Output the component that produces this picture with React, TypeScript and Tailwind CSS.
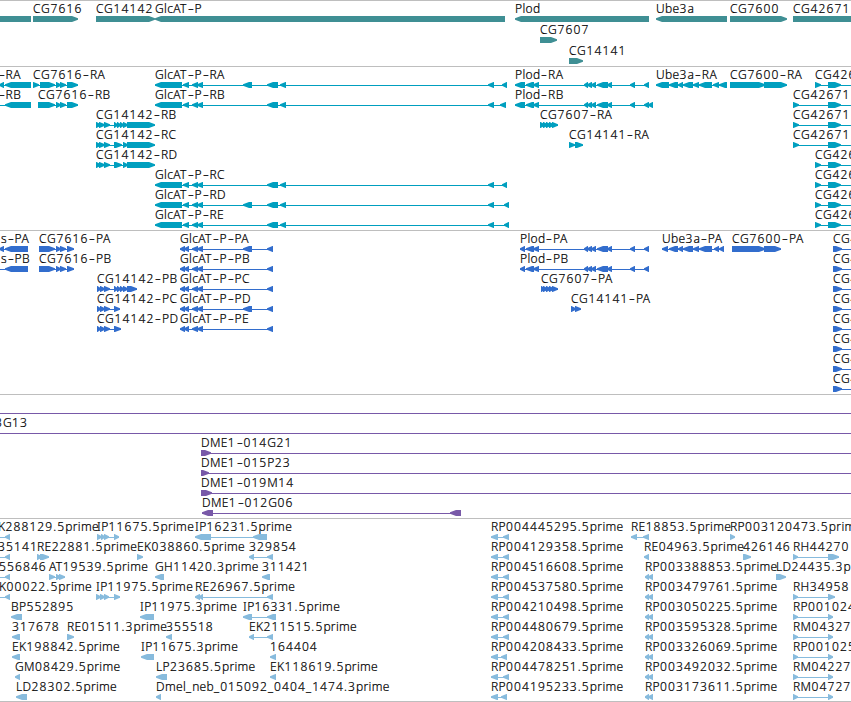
type Dir = "l" | "r";
type Exon = [number, number];
type Feature = {
  label?: string;
  x: number;
  dir: Dir;
  exons: Exon[];
  line?: Exon;
};

const f = (
  label: string,
  x: number,
  dir: Dir,
  exons: Exon[],
  line?: Exon
): Feature => ({ label, x, dir, exons, line });

// exon sets shared by several isoforms
const cg7616: Exon[] = [[56, 61], [60, 66]];
const cg14142: Exon[] = [[96, 101], [99, 105], [104, 110]];
const glcat: Exon[] = [[155, 182], [183, 189], [192, 198], [197, 203]];
const glcatMid: Exon[] = [[267, 278], [280, 286], [488, 494]];
const plodMid: Exon[] = [[584, 588], [587, 592], [591, 596], [597, 608], [607, 612], [630, 635]];
const plod: Exon[] = [[515, 525], [526, 534], [533, 539], ...plodMid];
const plodP: Exon[] = [[520, 525], [526, 534], [533, 539], ...plodMid, [644, 649]];
const glcatP: Exon[] = [[180, 185], [184, 189], [192, 198], [197, 203], [267, 273]];
const glcatPLong: Exon[] = [...glcatP, [243, 252]];
const cg14142P: Exon[] = [[97, 101], [100, 105], [104, 110]];

const longCG = f("CG42671", 793, "r", [[793, 799], [828, 841]], [793, 851]);
const shortCG = f("CG42671", 815, "r", [[815, 821], [828, 841]], [815, 851]);
const protCG = f("CG42671", 833, "r", [[833, 842]], [833, 851]);

const genes: Feature[][] = [
  [
    { x: 0, dir: "l", exons: [[-20, 31]] },
    f("CG7616", 33, "r", [[33, 78]]),
    f("CG14142", 96, "r", [[96, 155]]),
    f("GlcAT-P", 155, "l", [[155, 505]]),
    f("Plod", 515, "l", [[515, 649]]),
    f("Ube3a", 656, "l", [[656, 727]]),
    f("CG7600", 730, "r", [[730, 787]]),
    f("CG42671", 793, "r", [[793, 880]]),
  ],
  [f("CG7607", 540, "r", [[540, 557]])],
  [f("CG14141", 569, "r", [[569, 583]])],
];

const transcripts: Feature[][] = [
  [
    f("-RA", -2, "l", [[-1, 4], [5, 31]]),
    f("CG7616-RA", 33, "r", [[33, 39], [40, 55], ...cg7616, [67, 78]]),
    f("GlcAT-P-RA", 155, "l", [...glcat, [243, 252], ...glcatMid, [502, 507]]),
    f("Plod-RA", 515, "l", [...plod, [644, 649]]),
    f("Ube3a-RA", 656, "l", [[656, 669], [669, 678], [678, 683], [683, 693], [693, 699], [699, 712], [713, 719], [719, 727]]),
    f("CG7600-RA", 730, "r", [[730, 765], [764, 787]]),
    shortCG,
  ],
  [
    f("-RB", -2, "l", [[5, 31]], [0, 31]),
    f("CG7616-RB", 38, "r", [[38, 55], ...cg7616, [67, 78]]),
    f("GlcAT-P-RB", 155, "l", [...glcat, ...glcatMid, [500, 506]]),
    f("Plod-RB", 515, "l", [...plod, [644, 649], [648, 653]]),
    longCG,
  ],
  [
    f("CG14142-RB", 96, "r", [...cg14142, [114, 118], [117, 121], [120, 124], [123, 128], [127, 155]]),
    f("CG7607-RA", 540, "r", [[540, 545], [543, 548], [546, 551], [549, 554], [552, 558]]),
    longCG,
  ],
  [
    f("CG14142-RC", 96, "r", [...cg14142, [114, 122], [123, 128], [127, 155]]),
    f("CG14141-RA", 569, "r", [[569, 575], [575, 583]]),
    longCG,
  ],
  [f("CG14142-RD", 96, "r", [...cg14142, [114, 122], [123, 128], [127, 155]]), shortCG],
  [f("GlcAT-P-RC", 155, "l", [...glcat, ...glcatMid, [502, 507]]), shortCG],
  [f("GlcAT-P-RD", 155, "l", [...glcat, [243, 252], ...glcatMid, [504, 509]]), shortCG],
  [f("GlcAT-P-RE", 155, "l", [...glcat, ...glcatMid, [504, 509]]), shortCG],
];

const proteins: Feature[][] = [
  [
    f("s-PA", 1, "l", [[-1, 4], [5, 28]]),
    f("CG7616-PA", 39, "r", [[39, 55], ...cg7616, [67, 74]]),
    f("GlcAT-P-PA", 180, "l", glcatPLong),
    f("Plod-PA", 520, "l", plodP),
    f("Ube3a-PA", 662, "l", [[662, 668], [669, 678], [678, 683], [683, 693], [693, 699], [699, 712], [714, 719], [719, 724]]),
    f("CG7600-PA", 732, "r", [[732, 765], [764, 781]]),
    protCG,
  ],
  [
    f("s-PB", 1, "l", [[5, 28]], [0, 28]),
    f("CG7616-PB", 39, "r", [[39, 55], ...cg7616, [67, 74]]),
    f("GlcAT-P-PB", 180, "l", glcatP),
    f("Plod-PB", 520, "l", plodP),
    protCG,
  ],
  [
    f("CG14142-PB", 97, "r", [...cg14142P, [114, 118], [117, 121], [120, 124], [123, 128], [127, 137]]),
    f("GlcAT-P-PC", 180, "l", glcatP),
    f("CG7607-PA", 541, "r", [[541, 545], [543, 548], [546, 551], [549, 554], [552, 558]]),
    protCG,
  ],
  [
    f("CG14142-PC", 97, "r", [...cg14142P, [114, 120]]),
    f("GlcAT-P-PD", 180, "l", glcatPLong),
    f("CG14141-PA", 571, "r", [[571, 576], [575, 581]]),
    protCG,
  ],
  [
    f("CG14142-PD", 97, "r", [...cg14142P, [114, 121]]),
    f("GlcAT-P-PE", 180, "l", glcatP),
    protCG,
  ],
  [protCG],
  [protCG],
  [protCG],
];

const bacs: Feature[][] = [
  [{ x: 0, dir: "r", exons: [], line: [0, 851] }],
  [f("3G13", -5, "r", [], [0, 851])],
  [f("DME1-014G21", 201, "r", [[201, 211]], [201, 851])],
  [f("DME1-015P23", 201, "r", [[201, 209]], [201, 851])],
  [f("DME1-019M14", 201, "r", [[201, 212]], [201, 851])],
  [f("DME1-012G06", 202, "l", [[202, 213], [450, 461]])],
];

const edge = (label: string, x: number) => f(label, x, "l", [[5, 10]], [0, 10]);
const rp4 = (id: string, end = 509) =>
  f(`RP004${id}.5prime`, 491, "l", [[491, 498], [end - 6, end]]);
const rp3 = (id: string) => f(`RP003${id}.5prime`, 645, "l", [[645, 649], [648, 653]]);
const right = (label: string, end = 833) => f(label, 793, "r", [[793, 798], [828, end]]);

const ests: Feature[][] = [
  [
    edge("K288129.5prime", -2),
    f("IP11675.5prime", 97, "r", [[97, 102], [101, 105], [104, 109], [114, 119]]),
    f("IP16231.5prime", 195, "l", [[195, 211], [253, 267]]),
    rp4("445295"),
    f("RE18853.5prime", 631, "l", [[631, 637], [643, 649]]),
    f("RP003120473.5prime", 730, "r", [[730, 735]]),
  ],
  [
    edge("35141", -2),
    f("RE22881.5prime", 37, "r", [[37, 42], [40, 49]]),
    f("EK038860.5prime", 137, "r", [[137, 143]]),
    f("329854", 249, "l", [[249, 254], [267, 273]]),
    rp4("129358"),
    f("RE04963.5prime", 644, "l", [[644, 649]]),
    f("426146", 743, "r", [[743, 751]]),
    right("RH44270", 839),
  ],
  [
    edge("556846", -1),
    f("AT19539.5prime", 49, "r", [[49, 55], [56, 61], [59, 65]]),
    f("GH11420.3prime", 155, "l", [[155, 164]]),
    f("311421", 262, "l", [[262, 270]]),
    rp4("516608"),
    rp3("388853"),
    f("LD24435.3prime", 776, "r", [[776, 786]]),
  ],
  [
    edge("K00022.5prime", -1),
    f("IP11975.5prime", 96, "r", [[96, 101], [100, 105], [104, 109], [114, 120]]),
    f("RE26967.5prime", 195, "l", [[195, 200], [199, 203], [267, 273]]),
    rp4("537580"),
    rp3("479761"),
    right("RH34958", 835),
  ],
  [
    f("BP552895", 11, "l", [[11, 22]]),
    f("IP11975.3prime", 140, "l", [[140, 154]]),
    f("IP16331.5prime", 243, "l", [[243, 252], [267, 276]]),
    rp4("210498"),
    rp3("050225"),
    right("RP001024"),
  ],
  [
    f("317678", 12, "l", [[12, 20]]),
    f("RE01511.3prime", 67, "r", [[67, 74]]),
    f("355518", 166, "l", [[166, 172]]),
    f("EK211515.5prime", 249, "l", [[249, 254], [267, 273]]),
    rp4("480679"),
    rp3("595328"),
    right("RM04327"),
  ],
  [
    f("EK198842.5prime", 12, "l", [[12, 20]]),
    f("IP11675.3prime", 141, "l", [[141, 154]]),
    f("164404", 270, "l", [[270, 276]]),
    rp4("208433", 507),
    rp3("326069"),
    right("RP001025"),
  ],
  [
    f("GM08429.5prime", 15, "l", [[15, 20]]),
    f("LP23685.5prime", 156, "l", [[156, 167]]),
    f("EK118619.5prime", 270, "l", [[270, 276]]),
    rp4("478251"),
    rp3("492032"),
    right("RM04227"),
  ],
  [
    f("LD28302.5prime", 16, "l", [[16, 27]]),
    f("Dmel_neb_015092_0404_1474.3prime", 156, "l", [[156, 161]]),
    rp4("195233", 507),
    rp3("173611"),
    right("RM04727"),
  ],
];

function arrow([a, b]: Exon, dir: Dir) {
  const tip = Math.min(6, b - a - 0.5);
  if (dir === "r") {
    return `${a},14 ${b - tip},14 ${b},16.2 ${b},17.8 ${b - tip},20 ${a},20`;
  }
  return `${b},14 ${a + tip},14 ${a},16.2 ${a},17.8 ${a + tip},20 ${b},20`;
}

// digits sit on a wider pitch than letters, dashes wider still
function tracking(run: string) {
  if (run === "-") return "inline-block w-[7.6px] scale-x-150 text-center";
  if (/^[\d._]/.test(run)) return "tracking-[1.12px]";
  if (run === "CG") return "tracking-[0.8px]";
  if (/^[A-Z]/.test(run)) return "tracking-[0.4px]";
  return "tracking-[0.3px]";
}

function Label({ text, x }: { text: string; x: number }) {
  const runs = text.match(/[a-z]+|[A-Z]+|[\d._]+|-/g) ?? [];
  return (
    <span className="absolute top-0 whitespace-pre text-black" style={{ left: x }}>
      {runs.map((run, i) => (
        <span key={i} className={tracking(run)}>
          {run}
        </span>
      ))}
    </span>
  );
}

function Row({ features, className }: { features: Feature[]; className: string }) {
  return (
    <div className={`relative shrink-0 ${className}`}>
      <svg className="block h-5 w-[851px]" viewBox="0 0 851 20" fill="currentColor">
        {features.map((feat, i) => {
          const xs = feat.exons.flat();
          const [from, to] = feat.line ?? [Math.min(...xs), Math.max(...xs)];
          return (
            <g key={i}>
              {(feat.line || feat.exons.length > 1) && (
                <rect x={from} y={17} width={to - from} height={1} />
              )}
              {feat.exons.map((exon, j) => (
                <polygon key={j} points={arrow(exon, feat.dir)} />
              ))}
            </g>
          );
        })}
      </svg>
      {features.map(
        (feat, i) => feat.label && <Label key={i} text={feat.label} x={feat.x} />
      )}
    </div>
  );
}

function Track({
  rows,
  className,
  rowClass = "h-5",
}: {
  rows: Feature[][];
  className: string;
  rowClass?: string;
}) {
  return (
    <section className={`flex flex-col border-t border-[#bebebe] pt-px ${className}`}>
      {rows.map((row, i) => (
        <Row key={i} features={row} className={rowClass} />
      ))}
    </section>
  );
}

export default function App() {
  return (
    <main className="flex h-[702px] w-[851px] flex-col overflow-hidden bg-white font-['Noto_Sans'] text-[12px] font-light leading-[14px] [-webkit-text-stroke:0.2px_black]">
      <Track rows={genes} className="h-[66px] text-[#3f8f94]" rowClass="h-[21px]" />
      <Track rows={transcripts} className="h-[164px] text-[#009fbf]" />
      <Track rows={proteins} className="h-[164px] text-[#326dcd]" />
      <Track rows={bacs} className="h-[124px] text-[#7859a8]" />
      <Track rows={ests} className="h-[183px] text-[#87bbdd]" />
      <div className="h-px bg-[#bebebe]" />
    </main>
  );
}
